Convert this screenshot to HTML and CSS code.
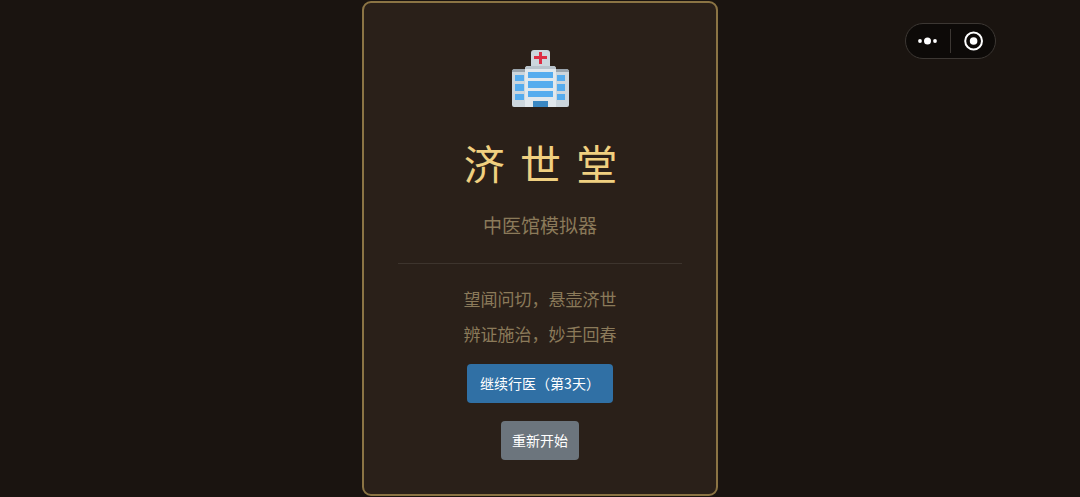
FILE: index.html
```html
<!DOCTYPE html>
<html lang="zh-CN">
<head>
    <meta charset="UTF-8">
    <meta name="viewport" content="width=device-width, initial-scale=1.0">
    <title>济世堂</title>
    <link rel="stylesheet" href="styles.css">
</head>
<body>

    <!-- 小程序胶囊按钮 -->
    <div class="capsule">
        <button class="capsule-button" aria-label="更多">
            <svg width="20" height="20" viewBox="0 0 20 20" fill="#fff">
                <circle cx="2" cy="10" r="1.9"/>
                <circle cx="9.5" cy="10" r="3.5"/>
                <circle cx="17" cy="10" r="1.9"/>
            </svg>
        </button>
        <button class="capsule-button" aria-label="关闭">
            <svg width="20" height="20" viewBox="0 0 20 20">
                <circle cx="10.6" cy="10" r="8.4" fill="none" stroke="#fff" stroke-width="2"/>
                <circle cx="10.6" cy="10" r="3.8" fill="#fff"/>
            </svg>
        </button>
    </div>

    <main class="card">
        <svg class="logo" viewBox="0 0 57 57" aria-hidden="true">
            <path d="M0 22q0-3 3-3h13v38H2q-2 0-2-2zM57 22q0-3-3-3H41v38h14q2 0 2-2z" fill="#ccd6dd"/>
            <path d="M0 22q0-3 3-3h11v3zM57 22q0-3-3-3H43v3z" fill="#99a4ad"/>
            <path d="M19 16V3q0-3 3-3h13q3 0 3 3v13z" fill="#ccd6dd"/>
            <path d="M13 19q0-3 3-3h25q3 0 3 3v38H13z" fill="#e1e8ed"/>
            <path d="M13 19q0-3 3-3h25q3 0 3 3z" fill="#b8c3cc"/>
            <path d="M27 2h3v4h5v3h-5v5h-3V9h-5V6h5z" fill="#dd2e44"/>
            <path d="M16 22h25v6H16zM16 31h25v7H16zM16 41h25v6H16zM3 25h9v6H3zM3 34h9v7H3zM3 44h9v6H3zM45 25h8v6h-8zM45 34h8v7h-8zM45 44h8v6h-8z" fill="#55acee"/>
            <path d="M21 51h15v6H21z" fill="#3b88c3"/>
        </svg>
        <h1 class="title">济 世 堂</h1>
        <p class="subtitle">中医馆模拟器</p>
        <hr class="divider">
        <p class="intro">望闻问切，悬壶济世<br>辨证施治，妙手回春</p>
        <button class="btn btn-continue">继续行医（第3天）</button>
        <button class="btn btn-restart">重新开始</button>
    </main>

</body>
</html>
```
FILE: styles.css
```css
* {
    box-sizing: border-box;
}

body {
    margin: 0;
    padding: 1px 16px;
    min-height: 100vh;
    background-color: #1a1410;
    font-family: "Noto Sans CJK SC", sans-serif;
}

/* 中间的卡片 */
.card {
    display: flex;
    flex-direction: column;
    align-items: center;
    max-width: 356px;
    margin: 0 auto;
    padding: 47px 34px 34px;
    border: 2px solid #8b7444;
    border-radius: 9px;
    background-color: #2a2019;
    text-align: center;
}

.logo {
    width: 57px;
    height: 57px;
}

.title {
    margin: 25px 0 0;
    padding-left: 4px;
    font-size: 41px;
    font-weight: 400;
    line-height: 60px;
    letter-spacing: 3px;
    color: #f0d080;
}

.subtitle {
    margin: 19px 0 0;
    font-size: 19px;
    line-height: 28px;
    color: #8b7a5a;
}

.divider {
    width: 100%;
    height: 1px;
    margin: 24px 0 17px;
    border: none;
    background-color: #3d342d;
}

.intro {
    margin: 0;
    font-size: 17px;
    line-height: 35px;
    color: #8b7a5a;
}

.btn {
    height: 39px;
    border: none;
    border-radius: 4px;
    font-family: inherit;
    font-size: 14px;
    color: #fff;
    cursor: pointer;
}

.btn-continue {
    margin-top: 13px;
    padding: 0 13px 2px;
    background-color: #3070a5;
}

.btn-restart {
    margin-top: 18px;
    padding: 0 11px 2px;
    background-color: #6c757d;
}

/* 右上角胶囊 */
.capsule {
    position: absolute;
    top: 23px;
    right: 84px;
    display: flex;
    align-items: center;
    width: 91px;
    height: 36px;
    border: 1px solid #3c3733;
    border-radius: 18px;
    background-color: #0d0a08;
}

.capsule-button {
    display: flex;
    flex: 1;
    align-items: center;
    justify-content: center;
    height: 24px;
    padding: 0;
    border: none;
    background: none;
    cursor: pointer;
}

.capsule-button + .capsule-button {
    border-left: 1px solid #3c3733;
}
```
